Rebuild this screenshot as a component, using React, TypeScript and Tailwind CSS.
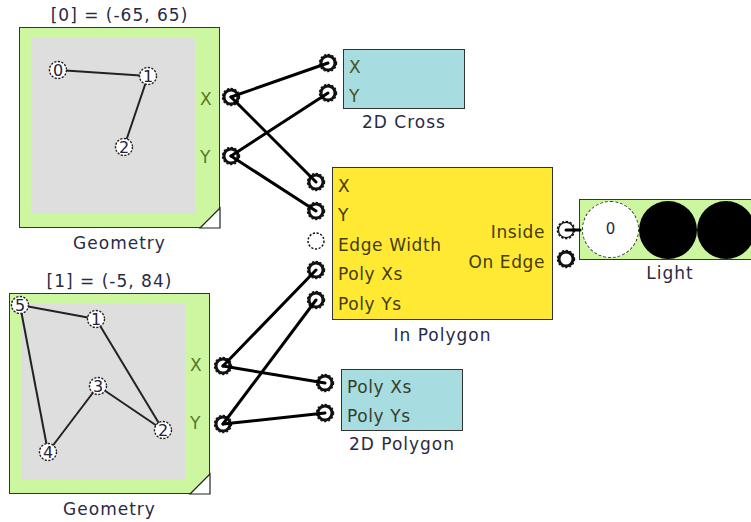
import React from "react";

const FONT = "font-['DejaVu_Sans',sans-serif]";

type P = [number, number];

function Marker({ x, y, n }: { x: number; y: number; n: string }) {
  return (
    <g>
      <circle cx={x} cy={y} r={8.5} fill="#fff" stroke="#222" strokeWidth={1.4} strokeDasharray="2.2 1.4" />
      <text x={x} y={y + 6} textAnchor="middle" fontSize={16} fontFamily="DejaVu Sans, sans-serif" fill="#22223e">
        {n}
      </text>
    </g>
  );
}

function GeometryNode({
  left,
  top,
  title,
  points,
  lines,
}: {
  left: number;
  top: number;
  title: string;
  points: { p: P; n: string }[];
  lines: [number, number][];
}) {
  return (
    <div className="absolute flex flex-col items-center" style={{ left: left - 20, top: top - 24, width: 241 }}>
      <div className="h-6 text-[17px] leading-6 tracking-[1px] text-[#2a2a44] whitespace-nowrap">{title}</div>
      <div className="relative h-[201px] w-[201px] border-[1.5px] border-[#333] bg-[#cdf6a0]">
        <div className="absolute left-[11px] top-[10px] h-[176px] w-[164px] bg-[#dedede]" />
        <svg className="absolute -left-[1.5px] -top-[1.5px] overflow-visible" width={201} height={201}>
          {lines.map(([a, b], i) => (
            <line
              key={i}
              x1={points[a].p[0]}
              y1={points[a].p[1]}
              x2={points[b].p[0]}
              y2={points[b].p[1]}
              stroke="#222"
              strokeWidth={2}
            />
          ))}
          {points.map((pt, i) => (
            <Marker key={i} x={pt.p[0]} y={pt.p[1]} n={pt.n} />
          ))}
          <polygon points="181,201 201,181 201,201" fill="#fff" stroke="#222" strokeWidth={1.2} />
        </svg>
        <div className="absolute left-[180px] top-[61px] text-[17px] leading-5 text-[#587a28]">X</div>
        <div className="absolute left-[180px] top-[119px] text-[17px] leading-5 text-[#587a28]">Y</div>
      </div>
      <div className="mt-[5px] text-[17px] leading-5 tracking-[1px] text-[#2a2a44]">Geometry</div>
    </div>
  );
}

function Port({ x, y, kind }: { x: number; y: number; kind: "solid" | "dotted" | "thin" }) {
  if (kind === "dotted") {
    return <circle cx={x} cy={y} r={8} fill="#fff" stroke="#111" strokeWidth={1.4} strokeDasharray="2.2 1.6" />;
  }
  if (kind === "thin") {
    return (
      <g>
        <circle cx={x} cy={y} r={8.6} fill="#fff" stroke="#111" strokeWidth={1.4} strokeDasharray="2.4 1.6" />
        <circle cx={x} cy={y} r={7.6} fill="#fff" stroke="#111" strokeWidth={1.4} />
      </g>
    );
  }
  return (
    <g>
      <circle cx={x} cy={y} r={8.6} fill="none" stroke="#111" strokeWidth={1.2} strokeDasharray="2.2 1.8" />
      <circle cx={x} cy={y} r={7} fill="#fff" stroke="#111" strokeWidth={3} />
    </g>
  );
}

export default function App() {
  const wires: [P, P][] = [
    [[231, 97], [328, 63]],
    [[231, 97], [316, 182]],
    [[231, 156], [328, 93]],
    [[231, 156], [316, 211]],
    [[223, 366], [316, 270]],
    [[223, 366], [325, 383]],
    [[223, 424], [316, 300]],
    [[223, 424], [325, 413]],
    [[566, 230], [580, 230]],
  ];

  const inPolyLabels = ["X", "Y", "Edge Width", "Poly Xs", "Poly Ys"];

  return (
    <div className={`relative h-[522px] w-[751px] overflow-hidden bg-white ${FONT}`}>
      <GeometryNode
        left={19}
        top={27}
        title="[0] = (-65, 65)"
        points={[
          { p: [39, 43], n: "0" },
          { p: [129, 49], n: "1" },
          { p: [105, 120], n: "2" },
        ]}
        lines={[
          [0, 1],
          [1, 2],
        ]}
      />

      <GeometryNode
        left={9}
        top={293}
        title="[1] = (-5, 84)"
        points={[
          { p: [87, 26], n: "1" },
          { p: [154, 137], n: "2" },
          { p: [89, 93], n: "3" },
          { p: [39, 159], n: "4" },
          { p: [11, 12], n: "5" },
        ]}
        lines={[
          [4, 0],
          [0, 1],
          [1, 2],
          [2, 3],
          [3, 4],
        ]}
      />

      {/* 2D Cross */}
      <div className="absolute flex flex-col items-center" style={{ left: 343, top: 49, width: 122 }}>
        <div className="flex h-[60px] w-[122px] flex-col border-[1.5px] border-[#333] bg-[#a7dce0] pl-[5px] pt-[4px] text-[17px] leading-[30px] text-[#4a5428]">
          <div className="h-[30px] leading-[26px]">X</div>
          <div className="h-[26px] leading-[28px]">Y</div>
        </div>
        <div className="mt-[3px] text-[17px] leading-5 tracking-[1px] text-[#2a2a44]">2D Cross</div>
      </div>

      {/* In Polygon */}
      <div className="absolute flex flex-col items-center" style={{ left: 332, top: 167, width: 221 }}>
        <div className="relative flex h-[153px] w-[221px] border-[1.5px] border-[#333] bg-[#ffe933] text-[17px] text-[#433c0c]">
          <div className="flex flex-col pl-[5px] pt-[4px] tracking-[0.6px]">
            {inPolyLabels.map((l) => (
              <div key={l} className="h-[29.6px] leading-[29px] whitespace-nowrap">
                {l}
              </div>
            ))}
          </div>
          <div className="absolute right-[7px] top-[50px] flex flex-col items-end tracking-[0.6px]">
            <div className="h-[30px] leading-[28px]">Inside</div>
            <div className="h-[30px] leading-[28px]">On Edge</div>
          </div>
        </div>
        <div className="mt-[5px] text-[17px] leading-5 tracking-[1px] text-[#2a2a44]">In Polygon</div>
      </div>

      {/* 2D Polygon */}
      <div className="absolute flex flex-col items-center" style={{ left: 341, top: 369, width: 122 }}>
        <div className="flex h-[62px] w-[122px] flex-col border-[1.5px] border-[#333] bg-[#a7dce0] pl-[5px] pt-[3px] text-[17px] tracking-[0.6px] text-[#383c2c]">
          <div className="h-[30px] leading-[28px] whitespace-nowrap">Poly Xs</div>
          <div className="h-[28px] leading-[28px] whitespace-nowrap">Poly Ys</div>
        </div>
        <div className="mt-[3px] text-[17px] leading-5 tracking-[1px] text-[#2a2a44]">2D Polygon</div>
      </div>

      {/* Light */}
      <div className="absolute flex flex-col" style={{ left: 579, top: 199 }}>
        <div className="flex h-[61px] w-[200px] items-center border-[1.5px] border-[#333] bg-[#cdf6a0] pl-[2px]">
          <div className="flex h-[57px] w-[57px] shrink-0 items-center justify-center rounded-full border-[1.5px] border-dashed border-[#333] bg-white text-[15px] text-[#2a2a44]">
            0
          </div>
          <div className="h-[58px] w-[58px] shrink-0 rounded-full bg-black" />
          <div className="h-[58px] w-[58px] shrink-0 rounded-full bg-black" />
        </div>
        <div className="mt-[3px] w-[182px] text-center text-[17px] leading-5 tracking-[1px] text-[#2a2a44]">Light</div>
      </div>

      {/* ports + wires overlay */}
      <svg className="pointer-events-none absolute left-0 top-0" width={751} height={522}>
        <Port x={231} y={97} kind="solid" />
        <Port x={231} y={156} kind="solid" />
        <Port x={223} y={366} kind="solid" />
        <Port x={223} y={424} kind="solid" />
        <Port x={328} y={63} kind="solid" />
        <Port x={328} y={93} kind="solid" />
        <Port x={316} y={182} kind="solid" />
        <Port x={316} y={211} kind="solid" />
        <Port x={316} y={241} kind="dotted" />
        <Port x={316} y={270} kind="solid" />
        <Port x={316} y={300} kind="solid" />
        <Port x={325} y={383} kind="solid" />
        <Port x={325} y={413} kind="solid" />
        <Port x={566} y={230} kind="thin" />
        <Port x={566} y={259} kind="solid" />
        {wires.map(([a, b], i) => (
          <line key={i} x1={a[0]} y1={a[1]} x2={b[0]} y2={b[1]} stroke="#000" strokeWidth={3} strokeLinecap="round" />
        ))}
      </svg>
    </div>
  );
}
